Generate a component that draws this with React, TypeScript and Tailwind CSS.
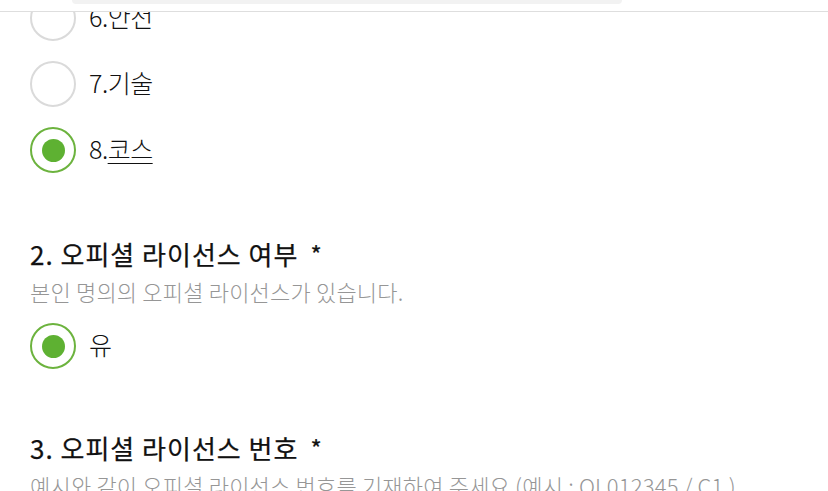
import React from "react";

const font = { fontFamily: '"Noto Sans CJK KR", "Noto Sans", sans-serif' };

function Radio({ checked }: { checked?: boolean }) {
  return (
    <span
      className={`flex h-[46px] w-[46px] shrink-0 items-center justify-center rounded-full border-2 ${
        checked ? "border-[#6cb33e]" : "border-[#dadada]"
      }`}
    >
      {checked && <span className="h-[23px] w-[23px] rounded-full bg-[#5eb132]" />}
    </span>
  );
}

function Option({ label, checked, underline }: { label: string; checked?: boolean; underline?: string }) {
  return (
    <label className="flex h-[46px] items-center gap-[13px]">
      <Radio checked={checked} />
      <span className="pb-[4px] text-[25px] font-light leading-none tracking-[-0.5px] text-[#111]">
        {label}
        {underline && <span className="underline underline-offset-[4px] decoration-1">{underline}</span>}
      </span>
    </label>
  );
}

function Question({ title, desc }: { title: string; desc: string }) {
  return (
    <div>
      <h2 className="flex h-[32px] items-center text-[26px] font-normal leading-none tracking-[1px] text-[#111] [-webkit-text-stroke:0.25px_#111]">
        {title}
        <span className="ml-[12px] text-[24px]">*</span>
      </h2>
      <p className="mt-[6px] flex h-[30px] items-center whitespace-nowrap text-[22px] font-light leading-none tracking-[0.2px] text-[#969696]">
        {desc}
      </p>
    </div>
  );
}

export default function App() {
  return (
    <div className="relative h-[491px] w-[828px] overflow-hidden bg-white" style={font}>
      {/* sticky top bar */}
      <div className="absolute inset-x-0 top-0 z-10 h-[12px] border-b border-[#dedede] bg-white">
        <div className="ml-[72px] h-[4px] w-[550px] rounded-b-[6px] bg-[#f2f2f2]" />
      </div>

      <div className="-mt-[5px] px-[30px]">
        <div className="flex flex-col gap-[20px]">
          <Option label="6.안전" />
          <Option label="7.기술" />
          <Option label="8." underline="코스" checked />
        </div>

        <div className="mt-[65px]">
          <Question title="2. 오피셜 라이선스 여부" desc="본인 명의의 오피셜 라이선스가 있습니다." />
          <div className="mt-[17px]">
            <Option label="유" checked />
          </div>
        </div>

        <div className="mt-[63px]">
          <Question
            title="3. 오피셜 라이선스 번호"
            desc="예시와 같이 오피셜 라이선스 번호를 기재하여 주세요 (예시 : OL012345 / C1 )"
          />
        </div>
      </div>
    </div>
  );
}
